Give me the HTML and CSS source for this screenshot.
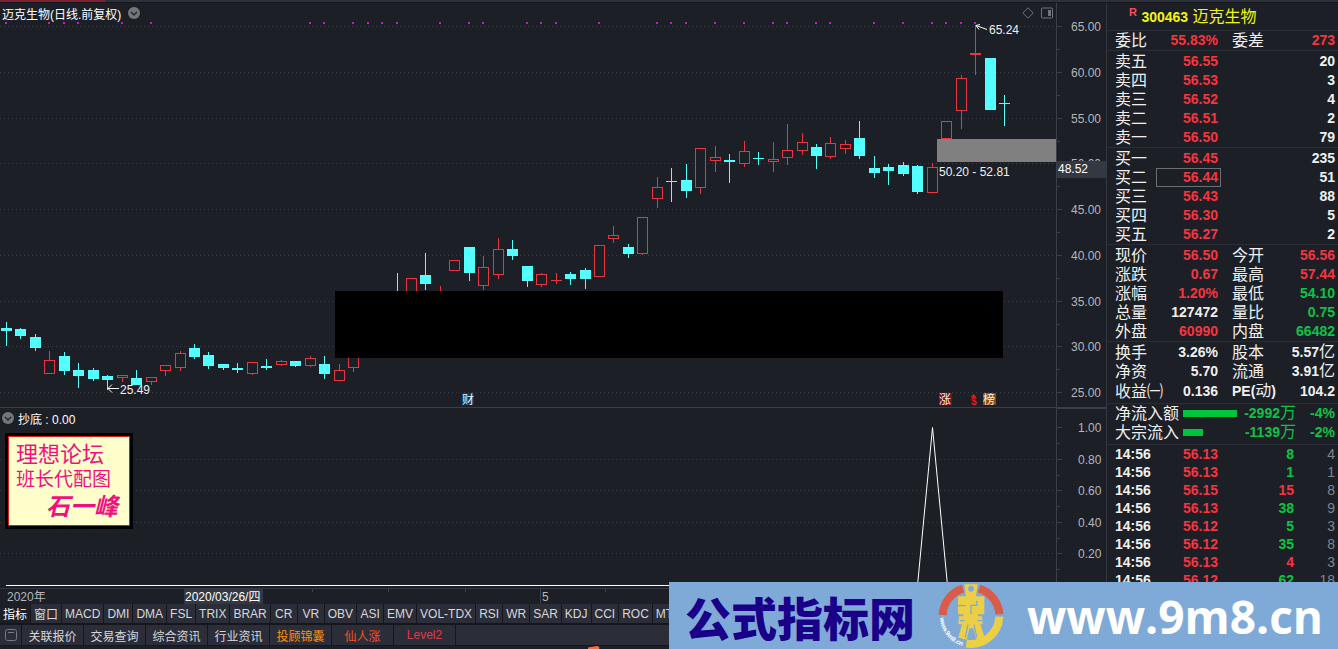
FILE: index.html
```
<!DOCTYPE html>
<html lang="zh-CN">

<head>
  <meta charset="UTF-8">
  <meta name="viewport" content="width=device-width, initial-scale=1.0">
  <title>迈克生物 300463</title>
  <link rel="stylesheet" href="styles.css">
</head>

<body>
  <div class="app">
    <div class="top-strip"></div>
    <div class="workspace">
      <main class="charts">
        <section class="panel price-panel">
          <svg class="plot" id="pricePlot"></svg>
          <svg class="axis" id="priceAxis"></svg>
          <div class="panel-title">
            <span>迈克生物(日线.前复权)</span>
            <svg class="chevron" viewBox="0 0 12 12"><circle cx="6" cy="6" r="6" /><path d="M3 5l3 3 3-3" /></svg>
          </div>
          <div class="panel-tools">
            <svg width="12" height="12" viewBox="0 0 12 12"><path d="M6 .8L11.2 6 6 11.2.8 6z" /></svg>
            <svg width="12" height="12" viewBox="0 0 12 12"><rect x=".5" y="1" width="11" height="10" rx="1" /><path class="fill" d="M7 3h3v6H7z" /></svg>
          </div>
        </section>
        <section class="panel signal-panel">
          <svg class="plot" id="signalPlot"></svg>
          <svg class="axis boxed" id="signalAxis"></svg>
          <div class="panel-title">
            <svg class="chevron" viewBox="0 0 12 12"><circle cx="6" cy="6" r="6" /><path d="M3 5l3 3 3-3" /></svg>
            <span>抄底 : 0.00</span>
          </div>
          <div class="stamp">
            <p class="stamp-forum">理想论坛</p>
            <p class="stamp-by">班长代配图</p>
            <p class="stamp-name">石一峰</p>
          </div>
        </section>
        <svg class="timeline" id="timeline"></svg>
      </main>

      <aside class="quote">
        <h1><sup>R</sup> <b>300463</b> 迈克生物</h1>
        <table class="up ratio">
          <colgroup><col class="c-label"><col class="c-value"><col class="c-label2"><col></colgroup>
          <tr><th>委比</th><td>55.83%</td><th>委差</th><td>273</td></tr>
        </table>
        <table class="book">
          <colgroup><col class="c-label"><col class="c-value"><col></colgroup>
          <tr><th>卖五</th><td class="up">56.55</td><td>20</td></tr>
          <tr><th>卖四</th><td class="up">56.53</td><td>3</td></tr>
          <tr><th>卖三</th><td class="up">56.52</td><td>4</td></tr>
          <tr><th>卖二</th><td class="up">56.51</td><td>2</td></tr>
          <tr><th>卖一</th><td class="up">56.50</td><td>79</td></tr>
        </table>
        <table class="book">
          <colgroup><col class="c-label"><col class="c-value"><col></colgroup>
          <tr><th>买一</th><td class="up">56.45</td><td>235</td></tr>
          <tr><th>买二</th><td class="up picked">56.44</td><td>51</td></tr>
          <tr><th>买三</th><td class="up">56.43</td><td>88</td></tr>
          <tr><th>买四</th><td class="up">56.30</td><td>5</td></tr>
          <tr><th>买五</th><td class="up">56.27</td><td>2</td></tr>
        </table>
        <table>
          <colgroup><col class="c-label"><col class="c-value"><col class="c-label2"><col></colgroup>
          <tr><th>现价</th><td class="up">56.50</td><th>今开</th><td class="up">56.56</td></tr>
          <tr><th>涨跌</th><td class="up">0.67</td><th>最高</th><td class="up">57.44</td></tr>
          <tr><th>涨幅</th><td class="up">1.20%</td><th>最低</th><td class="down">54.10</td></tr>
          <tr><th>总量</th><td>127472</td><th>量比</th><td class="down">0.75</td></tr>
          <tr><th>外盘</th><td class="up">60990</td><th>内盘</th><td class="down">66482</td></tr>
        </table>
        <table class="basics">
          <colgroup><col class="c-label"><col class="c-value"><col class="c-label2"><col></colgroup>
          <tr><th>换手</th><td>3.26%</td><th>股本</th><td>5.57<span class="unit">亿</span></td></tr>
          <tr><th>净资</th><td>5.70</td><th>流通</th><td>3.91<span class="unit">亿</span></td></tr>
          <tr><th>收益㈠</th><td>0.136</td><th><b>PE(</b>动<b>)</b></th><td>104.2</td></tr>
        </table>
        <table class="flow down">
          <colgroup><col class="c-flow"><col class="c-bar"><col class="c-amount"><col></colgroup>
          <tr><th>净流入额</th><td><div class="bar" style="width: 54px"></div></td><td>-2992<span class="unit">万</span></td><td>-4%</td></tr>
          <tr><th>大宗流入</th><td><div class="bar" style="width: 20px"></div></td><td>-1139<span class="unit">万</span></td><td>-2%</td></tr>
        </table>
        <table class="ticks">
          <colgroup><col class="c-label"><col class="c-value"><col class="c-volume"><col></colgroup>
          <tr><td>14:56</td><td class="up">56.13</td><td class="down">8</td><td>4</td></tr>
          <tr><td>14:56</td><td class="up">56.13</td><td class="down">1</td><td>1</td></tr>
          <tr><td>14:56</td><td class="up">56.15</td><td class="up">15</td><td>8</td></tr>
          <tr><td>14:56</td><td class="up">56.13</td><td class="down">38</td><td>9</td></tr>
          <tr><td>14:56</td><td class="up">56.12</td><td class="down">5</td><td>3</td></tr>
          <tr><td>14:56</td><td class="up">56.12</td><td class="down">35</td><td>8</td></tr>
          <tr><td>14:56</td><td class="up">56.13</td><td class="up">4</td><td>3</td></tr>
          <tr><td>14:56</td><td class="up">56.12</td><td class="down">62</td><td>18</td></tr>
        </table>
      </aside>
    </div>

    <nav class="indicators">
      <button class="active">指标</button>
      <button>窗口</button>
      <button>MACD</button>
      <button>DMI</button>
      <button>DMA</button>
      <button>FSL</button>
      <button>TRIX</button>
      <button>BRAR</button>
      <button>CR</button>
      <button>VR</button>
      <button>OBV</button>
      <button>ASI</button>
      <button>EMV</button>
      <button>VOL-TDX</button>
      <button>RSI</button>
      <button>WR</button>
      <button>SAR</button>
      <button>KDJ</button>
      <button>CCI</button>
      <button>ROC</button>
      <button>MTM</button>
    </nav>
    <nav class="tabs">
      <button class="window-btn" aria-label="窗口">
        <svg width="12" height="12" viewBox="0 0 12 12"><rect x=".5" y=".5" width="11" height="11" rx="2" /><path d="M3 3.5h6" /></svg>
      </button>
      <button>关联报价</button>
      <button>交易查询</button>
      <button>综合资讯</button>
      <button>行业资讯</button>
      <button class="gold">投顾锦囊</button>
      <button class="orange">仙人涨</button>
      <button class="red">Level2</button>
    </nav>
    <svg class="footer-mark" width="16" height="4" viewBox="0 0 16 4"><path d="M0 4V2L12 0l3 1v3z" /></svg>

    <div class="banner">
      <span class="banner-name">公式指标网</span>
      <svg class="banner-logo" viewBox="818 24 198 196">
        <path class="ring-red" d="M832 119A86 86 0 0 1 893 40" />
        <path class="ring-red" d="M941 40A86 86 0 0 1 1002 117" />
        <path class="ring-gold" d="M1002 124A86 86 0 0 1 903 205" />
        <path class="coin" fill-rule="evenodd" d="M897 27h40l-5 36h25v54h-20v6h13l2 24h-7l13 40-25 6-9-34h-12l-8 34-25-6 11-40h-11l2-24h13v-6h-16V63h24zM917 31a9 9 0 1 0 .1 0z" />
        <path class="cuts" d="M878 91h24M934 76v14h-17v27M898 136h-14M936 136h14M908 148l-8 38M926 148l8 38" />
        <path id="rim" class="rim" d="M824 127A92 92 0 0 0 905 214" />
        <text><textPath href="#rim">www.9m8.cn</textPath></text>
      </svg>
      <a class="banner-url" href="#">www.9m8.cn</a>
    </div>
  </div>
  <script src="chart.js"></script>
</body>

</html>
```

FILE: styles.css
```
* {
  margin: 0;
  padding: 0;
  box-sizing: border-box;
}

body {
  background-color: #1c1f26;
  color: #f0f0f0;
  font-family: "Liberation Sans", "Noto Sans CJK SC", sans-serif;
  font-size: 12px;
}

button {
  border: none;
  background: none;
  color: inherit;
  font: inherit;
}

.app {
  display: flex;
  flex-direction: column;
  position: relative;
  height: 100vh;
  overflow: hidden;
}

.top-strip {
  height: 3px;
  flex: none;
  background: linear-gradient(to right, #7c2431 105px, #2d313c 105px);
  border-bottom: 1px solid #14161b;
}

.workspace {
  display: flex;
  flex: 1;
  min-height: 0;
}

/* charts */

.charts {
  display: flex;
  flex-direction: column;
  flex: 1;
  min-width: 0;
  border-right: 1px solid #343842;
}

.panel {
  display: flex;
  position: relative;
}

.price-panel {
  height: 404px;
}

.signal-panel {
  flex: 1;
  min-height: 0;
  border-top: 1px solid #3b3f4a;
}

.plot {
  flex: 1;
  min-width: 0;
  height: 100%;
}

.axis {
  width: 50px;
  height: 100%;
  border-left: 1px solid #3b3f4a;
}

.axis.boxed {
  border-top: 1px solid #3b3f4a;
}

.timeline {
  width: 100%;
  height: 16px;
  border-top: 1px solid #343842;
}

.panel-title {
  display: flex;
  align-items: center;
  gap: 4px;
  position: absolute;
  left: 2px;
  top: 1px;
  height: 18px;
  color: #ffffff;
}

.price-panel .panel-title {
  gap: 7px;
}

.panel-tools {
  display: flex;
  gap: 7px;
  position: absolute;
  right: 53px;
  top: 4px;
}

.panel-tools svg {
  fill: none;
  stroke: #70747a;
}

.panel-tools .fill {
  fill: #70747a;
  stroke: none;
}

.chevron {
  width: 12px;
  height: 12px;
}

.chevron circle {
  fill: #74767a;
}

.chevron path {
  fill: none;
  stroke: #24272d;
  stroke-width: 1.5;
}

svg text {
  font-size: 12px;
  fill: #f0f0f0;
}

.axis text,
.timeline text {
  fill: #b4b6ba;
}

.timeline .current,
.axis .current {
  fill: #ffffff;
}

.grid {
  stroke: #383c44;
  stroke-dasharray: 1 3;
}

.tick {
  stroke: #3b3f4a;
}

.mask {
  fill: #000000;
}

.gap-zone {
  fill: #808080;
}

.cursor {
  fill: #343842;
}

.rise {
  fill: #1c1f26;
  stroke: #e8353f;
}

.fall {
  fill: #54ffff;
  stroke: #54ffff;
}

.mark {
  fill: #d014d0;
}

.pointer,
.signal {
  fill: none;
  stroke: #ffffff;
}

.badge-blue {
  fill: #07395c;
}

.badge-red {
  fill: #8c0710;
}

.badge-gold {
  fill: #8a4c0b;
}

svg .dollar {
  fill: #e8141e;
  font-size: 10px;
  font-weight: bold;
}

.stamp {
  position: absolute;
  left: 5px;
  top: 25px;
  width: 128px;
  height: 96px;
  padding: 5px 8px;
  border: 3px solid #000000;
  background-color: #ffffcc;
  box-shadow: inset 0 0 0 1px #e01818;
  color: #f0107f;
  white-space: nowrap;
}

.stamp-forum {
  font-size: 22px;
  line-height: 28px;
}

.stamp-by {
  font-size: 19px;
  line-height: 22px;
}

.stamp-name {
  padding-right: 4px;
  font-size: 24px;
  line-height: 32px;
  font-weight: bold;
  font-style: italic;
  text-align: right;
}

/* quote column */

.quote {
  width: 231px;
  overflow: hidden;
}

.quote h1 {
  height: 27px;
  padding-left: 22px;
  color: #f5f510;
  font-size: 16px;
  font-weight: normal;
  line-height: 27px;
}

.quote h1 b {
  font-size: 14px;
}

.quote sup {
  color: #ff4d57;
  font-size: 11px;
  font-weight: bold;
  line-height: 1;
}

.quote table {
  width: 100%;
  padding: 1px 3px 0 8px;
  border-top: 1px solid #2a2d35;
  border-spacing: 0;
  font-size: 14px;
  table-layout: fixed;
}

.quote .ratio {
  padding-top: 0;
}

.quote .basics {
  padding-bottom: 2px;
}

.quote .flow {
  padding-top: 0;
  padding-bottom: 2px;
}

.quote .ticks {
  padding-top: 0;
}

.c-label {
  width: 41px;
}

.c-value {
  width: 65px;
}

.c-label2 {
  width: 52px;
}

.c-flow {
  width: 68px;
}

.c-bar {
  width: 54px;
}

.c-amount {
  width: 59px;
}

.c-volume {
  width: 73px;
}

.quote th {
  height: 19px;
  color: #f0f0f0;
  font-size: 16px;
  font-weight: normal;
  line-height: 19px;
  text-align: left;
  white-space: nowrap;
}

.quote th b {
  font-size: 14px;
}

.quote td {
  font-weight: bold;
  line-height: 19px;
  text-align: right;
  white-space: nowrap;
}

.quote td:nth-child(2) {
  padding-right: 3px;
}

.quote th:nth-child(3) {
  padding-left: 11px;
}

.quote .flow td:nth-child(2) {
  padding-right: 0;
}

.quote .picked {
  box-shadow: inset 0 0 0 1px #6c6e72;
}

.unit {
  font-size: 16px;
  font-weight: normal;
  line-height: 16px;
}

.up {
  color: #f5353f;
}

.down {
  color: #0fc247;
}

.bar {
  height: 7px;
  background-color: #00c440;
}

.quote .ticks td {
  height: 18px;
  line-height: 18px;
}

.quote .ticks td:first-child {
  text-align: left;
}

.quote .ticks td:last-child {
  color: #80838a;
  font-weight: normal;
}

/* bottom bars */

.indicators,
.tabs {
  display: flex;
  flex: none;
  background-color: #2b2d38;
  color: #d6d8dc;
  overflow: hidden;
}

.indicators {
  height: 19px;
}

.indicators button {
  flex: none;
  min-width: 27px;
  padding: 0 3px;
  border-right: 1px solid #15171c;
}

.indicators .active {
  background-color: #1c1f26;
  color: #ffffff;
}

.tabs {
  height: 23px;
  border-top: 2px solid #15171c;
  border-bottom: 1px solid #15171c;
}

.tabs button {
  width: 62px;
  flex: none;
  border-right: 1px solid #15171c;
}

.tabs .window-btn {
  width: 22px;
}

.window-btn svg {
  display: block;
  margin: auto;
  fill: none;
  stroke: #777a82;
}

.tabs .gold {
  color: #ff9010;
}

.tabs .orange {
  color: #f4511e;
}

.tabs .red {
  color: #e03a48;
}

.footer-mark {
  flex: none;
  height: 3px;
  margin-left: 586px;
  fill: #ff6a3c;
}

.banner {
  display: flex;
  align-items: center;
  gap: 23px;
  position: absolute;
  left: 50%;
  right: 0;
  bottom: 0;
  height: 67px;
  padding-left: 16px;
  background-color: #7faad8;
  white-space: nowrap;
}

.banner-name {
  color: #1a0088;
  font-size: 46px;
  font-weight: 900;
}

.banner-logo {
  width: 66px;
  height: 66px;
  flex: none;
}

.banner-logo path {
  fill: none;
}

.banner-logo .ring-red {
  stroke: #d95b49;
  stroke-width: 24;
}

.banner-logo .ring-gold {
  stroke: #edcf45;
  stroke-width: 24;
}

.banner-logo .coin {
  fill: #edcf45;
}

.banner-logo .cuts {
  stroke: #7faad8;
  stroke-width: 4;
}

.banner-logo text {
  fill: #ffffff;
  font-size: 19px;
  font-weight: bold;
}

.banner-url {
  color: #ffffff;
  font-family: "Open Sans", sans-serif;
  font-size: 46px;
  font-weight: bold;
  line-height: 60px;
  text-decoration: none;
}
```

FILE: chart.js
```
// x centre, r = rise / f = fall, high, body top, body bottom, low
const candles = [
  [6, "f", 322, 328, 331, 346], [20, "f", 328, 329, 336, 339], [35, "f", 334, 337, 348, 351],
  [49, "r", 351, 360, 374, 374], [64, "f", 352, 356, 371, 375], [78, "f", 363, 370, 376, 388],
  [93, "f", 368, 370, 379, 381], [107, "f", 375, 376, 380, 390], [122, "r", 375, 375, 378, 382],
  [136, "f", 370, 378, 385, 385], [151, "r", 377, 377, 382, 385], [165, "r", 365, 365, 371, 376],
  [180, "r", 351, 353, 368, 371], [194, "f", 344, 348, 357, 359], [208, "f", 352, 355, 366, 369],
  [223, "f", 364, 364, 368, 370], [237, "f", 363, 368, 370, 373], [252, "r", 362, 362, 374, 375],
  [266, "f", 359, 366, 368, 370], [281, "r", 360, 361, 365, 366], [295, "f", 361, 361, 366, 367],
  [310, "r", 356, 358, 366, 367], [324, "f", 356, 364, 374, 379], [339, "r", 364, 370, 381, 381],
  [353, "r", 340, 340, 368, 372], [397, "f", 273, 292, 300, 300], [411, "r", 278, 278, 300, 300],
  [425, "f", 253, 275, 284, 290], [440, "r", 286, 292, 300, 300], [454, "r", 260, 260, 271, 271],
  [469, "f", 247, 247, 273, 281], [483, "r", 256, 267, 286, 290], [498, "r", 238, 249, 275, 279],
  [512, "f", 240, 249, 256, 260], [527, "f", 266, 266, 281, 287], [541, "r", 273, 274, 285, 287],
  [556, "r", 273, 280, 281, 284], [570, "f", 272, 274, 279, 285], [585, "f", 268, 270, 279, 289],
  [599, "r", 245, 245, 277, 277], [613, "r", 226, 235, 239, 243], [628, "f", 244, 247, 254, 258],
  [642, "r", 217, 217, 254, 255], [657, "r", 177, 187, 199, 208], [671, "f", 168, 181, 182, 202],
  [686, "f", 164, 180, 191, 198], [700, "r", 148, 148, 188, 194], [715, "r", 146, 157, 161, 172],
  [729, "f", 154, 160, 162, 183], [744, "r", 141, 151, 164, 167], [758, "f", 152, 158, 159, 165],
  [773, "r", 142, 159, 162, 172], [787, "r", 124, 150, 158, 165], [802, "r", 133, 142, 151, 155],
  [816, "f", 144, 147, 156, 169], [830, "r", 137, 143, 157, 159], [845, "r", 140, 144, 149, 154],
  [859, "f", 121, 138, 156, 159], [874, "f", 156, 168, 173, 178], [888, "f", 164, 167, 171, 185],
  [903, "f", 162, 165, 174, 176], [917, "f", 165, 166, 192, 194], [932, "r", 163, 167, 193, 193],
  [946, "r", 121, 121, 139, 139], [961, "r", 75, 78, 111, 129], [975, "r", 25, 53, 55, 75],
  [990, "f", 58, 58, 110, 110], [1004, "f", 95, 103, 104, 126]
];
const marks = [6, 49, 64, 78, 122, 151, 310, 324, 353, 368, 382, 397, 440, 469, 483, 527, 541, 556, 599,
  657, 671, 686, 715, 744, 773, 787, 816, 830, 874, 903, 932, 946, 961, 975];
const prices = [[65, 26], [60, 72], [55, 118], [50, 163], [45, 209], [40, 255], [35, 301], [30, 346], [25, 392]];
const levels = [["1.00", 427], ["0.80", 459], ["0.60", 490], ["0.40", 522], ["0.20", 553]];

function line(x1, y1, x2, y2, cls) {
  return `<line x1="${x1}" y1="${y1}" x2="${x2}" y2="${y2}" class="${cls}"/>`;
}
function rect(x, y, w, h, cls) {
  return `<rect x="${x}" y="${y}" width="${w}" height="${h}" class="${cls}"/>`;
}
function text(x, y, str, cls) {
  return `<text x="${x}" y="${y}" class="${cls || ""}">${str}</text>`;
}
function draw(id, top, body) {
  document.getElementById(id).innerHTML = `<g transform="translate(0,${-top})">${body}</g>`;
}
function candle([x, type, high, top, bottom, low]) {
  const cls = type === "r" ? "rise" : "fall";
  const h = bottom - top - 1;
  let out = line(x + 0.5, high, x + 0.5, low, cls);
  out += h < 1 ? line(x - 5, top + 0.5, x + 6, top + 0.5, cls) : rect(x - 4.5, top + 0.5, 10, h, cls);
  return out;
}

let plot = prices.map(p => line(0, p[1] + 0.5, "100%", p[1] + 0.5, "grid")).join("");
plot += marks.map(x => rect(x - 1, 22, 2, 2, "mark")).join("");
plot += rect(937, 139, 119, 23, "gap-zone");
plot += candles.map(candle).join("");
plot += rect(335, 291, 668, 67, "mask");
plot += text(939, 176, "50.20 - 52.81") + text(989, 34, "65.24") + text(120, 394, "25.49");
plot += '<path class="pointer" d="M987 29.5l-11-4m4-1l-4 1 3 4M119 388.5h-11m4-4l-4 4 4 4"/>';
plot += rect(462, 393, 12, 12, "badge-blue") + text(462, 404, "财");
plot += rect(939, 393, 13, 12, "badge-red") + text(939, 404, "涨");
plot += text(971, 405, "$", "dollar") + '<path class="dollar" d="M973.5 394l3 3h-6z"/>';
plot += rect(983, 393, 13, 12, "badge-gold") + text(983, 404, "榜");
draw("pricePlot", 3, plot);

let axis = prices.map(p => line(0, p[1] + 0.5, 5, p[1] + 0.5, "tick") +
  (p[0] > 25 ? line(0, p[1] + 23.5, 3, p[1] + 23.5, "tick") : "") +
  text(14, p[1] + 5, p[0].toFixed(2))).join("");
axis += rect(0, 161, 50, 17, "cursor") + text(1, 173, "48.52", "current");
draw("priceAxis", 3, axis);

let signal = levels.slice(1).map(l => line(0, l[1] + 0.5, "100%", l[1] + 0.5, "grid")).join("");
signal += '<path class="signal" d="M6 585.5H917.5L932.5 427.5 947.5 585.5H1056"/>';
draw("signalPlot", 408, signal);
draw("signalAxis", 409, levels.map(l => line(0, l[1] + 0.5, 5, l[1] + 0.5, "tick") +
  line(0, l[1] + 16.5, 3, l[1] + 16.5, "tick") + text(21, l[1] + 5, l[0])).join(""));

let time = [312, 388, 465, 605].map(x => line(x + 0.5, 0, x + 0.5, 3, "tick")).join("");
time += line(540.5, 0, 540.5, 16, "tick") + text(7, 12, "2020年") + text(542, 12, "5");
time += rect(184, 0, 79, 15, "cursor") + text(185, 12, "2020/03/26/四", "current");
draw("timeline", 0, time);
```
